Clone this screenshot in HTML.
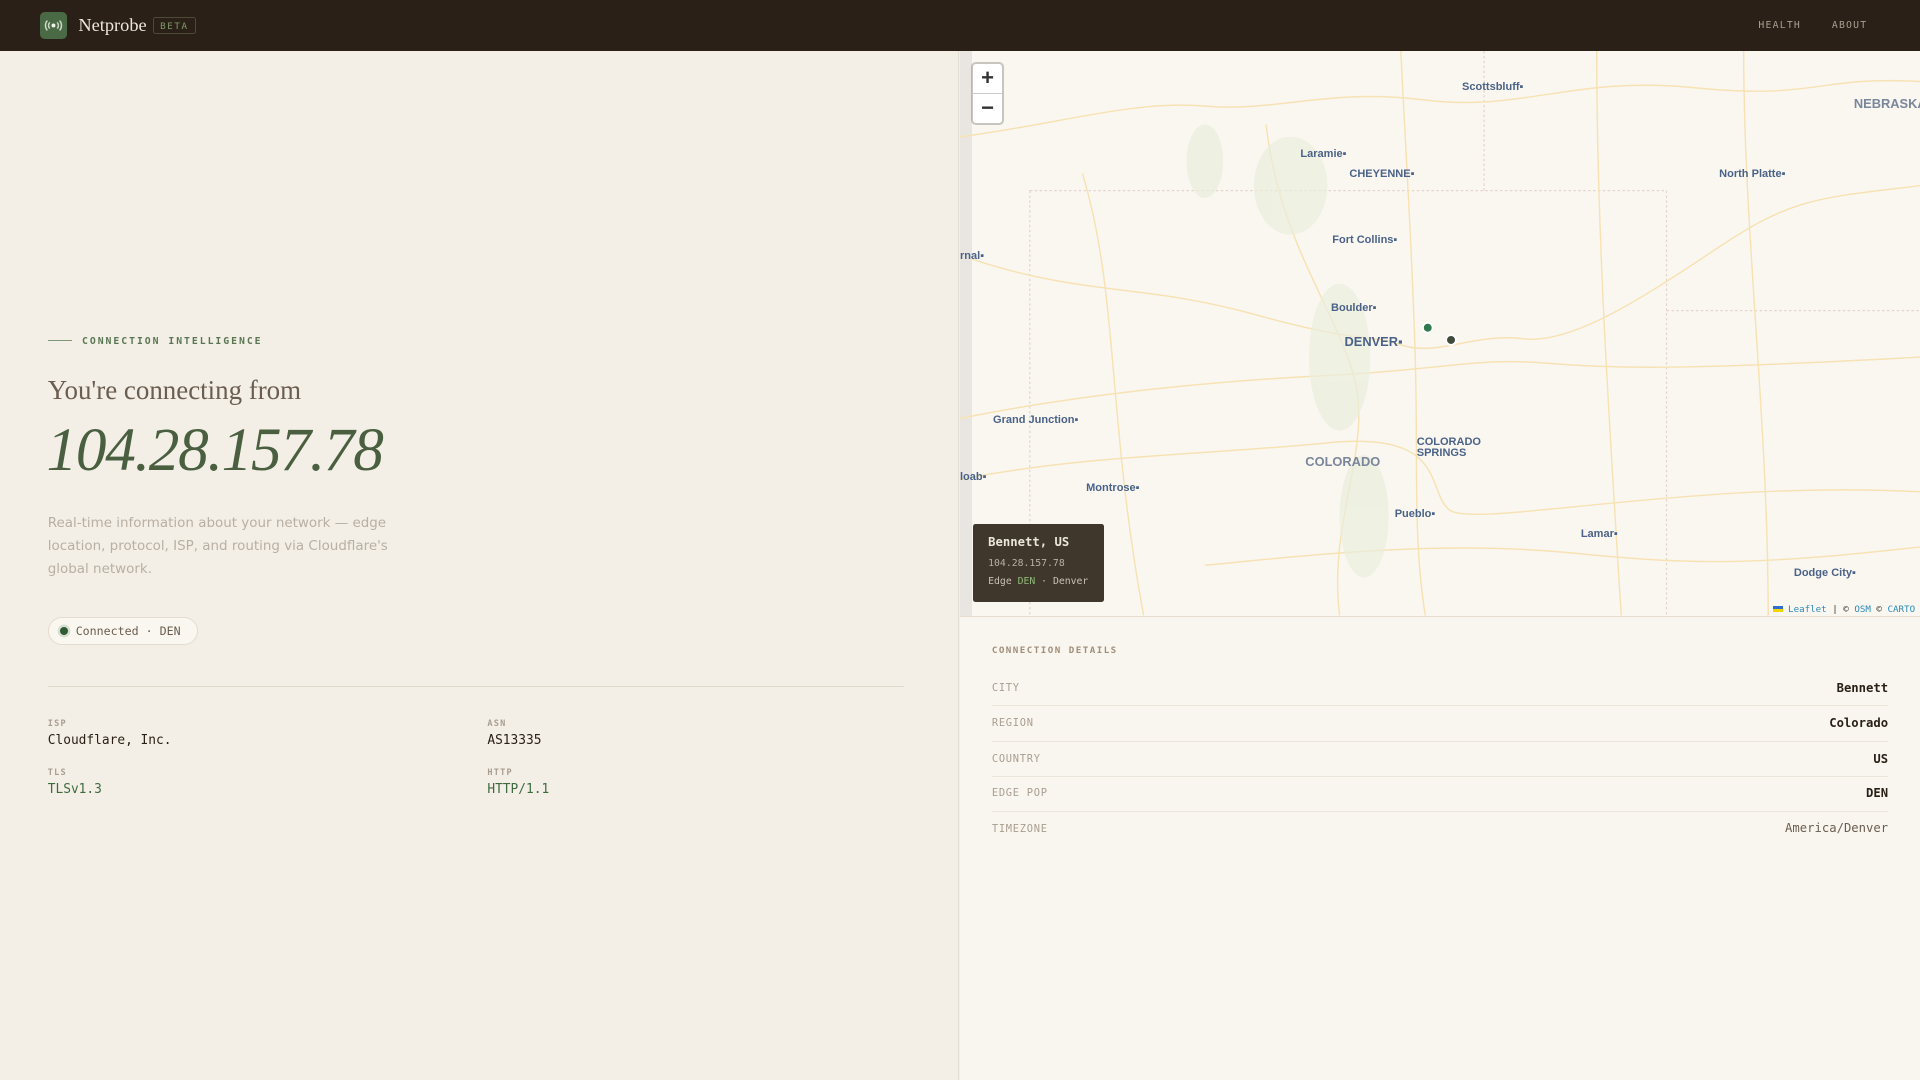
<!DOCTYPE html>
<html><head><meta charset="utf-8"><style>
html{zoom:1.22449}
*{box-sizing:border-box;margin:0;padding:0}
body{width:1568px;height:882px;background:#f3efe7;font-family:"Liberation Sans",sans-serif;overflow:hidden;position:relative}
.mono{font-family:"DejaVu Sans Mono","Liberation Mono",monospace}
.top{position:absolute;left:0;top:0;width:1568px;height:42px;background:#2a2017}
.logo{position:absolute;left:33px;top:10px;width:22px;height:22px;border-radius:4px;background:#4a6a45}
.brand{position:absolute;left:64px;top:12px;font-family:"Liberation Serif",serif;font-size:15px;color:#ece6da}
.beta{position:absolute;left:125px;top:14px;border:1px solid #4d4a36;border-radius:2px;color:#7e9a6a;font-size:7.5px;letter-spacing:1.3px;padding:2px 5px 1px}
.nav{position:absolute;top:16px;font-size:8px;letter-spacing:1px;color:#a99f90}
.left{position:absolute;left:0;top:42px;width:783px;height:840px;border-right:1px solid #e3ddd2}
.eyebrow{position:absolute;left:39px;top:274px;font-size:8px;font-weight:bold;letter-spacing:1.6px;color:#597652}
.eyebrow:before{content:"";display:inline-block;width:20px;height:1px;background:#7f9677;vertical-align:middle;margin-right:8px}
h1{position:absolute;left:39px;top:306px;font-family:"Liberation Serif",serif;font-weight:normal;font-size:22px;color:#6b5d4f}
.ip{position:absolute;left:38px;top:339px;font-family:"Liberation Serif",serif;font-style:italic;font-size:50px;color:#4a5f40;letter-spacing:-1px}
.desc{position:absolute;left:39px;top:418px;width:300px;font-family:"DejaVu Sans",sans-serif;font-size:11px;line-height:19px;color:#b9afa3}
.pill{position:absolute;left:39px;top:504px;width:123px;height:23px;border:1px solid #e3dccf;border-radius:12px;background:#faf7f1;font-size:9.5px;color:#6b5d4f;padding:5px 0 0 22px}
.pill:before{content:"";position:absolute;left:9px;top:7px;width:7px;height:7px;border-radius:50%;background:#2f5a35;box-shadow:0 0 0 2px #d8e0d2}
.hr{position:absolute;left:39px;top:560px;width:699px;height:1px;background:#e1d9cc}
.k{position:absolute;font-size:7px;letter-spacing:1px;color:#a99d90;font-weight:bold}
.v{position:absolute;font-size:10.5px;color:#2a2017}
.g{color:#3e6b3e}
.right{position:absolute;left:784px;top:503px;width:784px;height:379px;background:#f9f6f0;border-top:1px solid #e6dccd}
.dt{position:absolute;left:26px;top:23px;font-size:7.5px;letter-spacing:1.2px;color:#a08d78;font-weight:bold}
.row{position:absolute;left:26px;width:732px;height:29px;border-bottom:1px solid #ebe5da}
.row span{position:absolute;left:0;top:9px;font-size:8.5px;letter-spacing:.6px;color:#a99d90}
.row b{position:absolute;right:0;top:8px;font-size:10px;color:#2a2017}
.map{position:absolute;left:784px;top:42px;width:784px;height:461px;background:#faf7f1;overflow:hidden}
.lab{position:absolute;font-size:9px;font-weight:bold;color:#4a6288;white-space:nowrap}
.lab.big{font-size:10.5px}
.zoom{position:absolute;left:9px;top:9px;width:27px;height:51px;background:#fff;border:2px solid rgba(0,0,0,.2);border-radius:4px;background-clip:padding-box}
.zoom div{height:24px;text-align:center;font-size:18px;font-weight:bold;color:#333;line-height:23px}
.tip{position:absolute;left:11px;top:386px;width:107px;height:64px;background:#3f372c;border-radius:2px;color:#ece6da;padding:9px 12px}
.attr{position:absolute;right:4px;bottom:1px;font-size:7.5px;color:#333}
.attr a{color:#2b8ab8;text-decoration:none}
</style></head><body>
<div class="top">
 <div class="logo"><svg width="22" height="22" viewBox="0 0 22 22" fill="none" stroke="#cfdac8" stroke-width="1.2"><circle cx="11" cy="11" r="1.6" fill="#eef2ea" stroke="none"/><path d="M8 8.5a3.5 3.5 0 0 0 0 5M14 8.5a3.5 3.5 0 0 1 0 5M6 7a6 6 0 0 0 0 8M16 7a6 6 0 0 1 0 8"/></svg></div>
 <div class="brand">Netprobe</div>
 <div class="beta mono">BETA</div>
 <div class="nav mono" style="left:1436px">HEALTH</div>
 <div class="nav mono" style="left:1496px">ABOUT</div>
</div>
<div class="left">
</div>
<div class="eyebrow mono">CONNECTION INTELLIGENCE</div>
<h1>You're connecting from</h1>
<div class="ip">104.28.157.78</div>
<div class="desc">Real-time information about your network — edge location, protocol, ISP, and routing via Cloudflare's global network.</div>
<div class="pill mono">Connected · DEN</div>
<div class="hr"></div>
<div class="k mono" style="left:39px;top:587px">ISP</div>
<div class="v mono" style="left:39px;top:599px">Cloudflare, Inc.</div>
<div class="k mono" style="left:398px;top:587px">ASN</div>
<div class="v mono" style="left:398px;top:599px">AS13335</div>
<div class="k mono" style="left:39px;top:627px">TLS</div>
<div class="v mono g" style="left:39px;top:639px">TLSv1.3</div>
<div class="k mono" style="left:398px;top:627px">HTTP</div>
<div class="v mono g" style="left:398px;top:639px">HTTP/1.1</div>

<div class="map">
 <div style="position:absolute;left:0;top:0;width:10px;height:461px;background:#e9e6e1"></div>
 <svg width="784" height="461" style="position:absolute;left:0;top:0" fill="none">
  <g stroke="#e6d3cc" stroke-dasharray="2 2" stroke-width="1">
   <path d="M57 114V461M57 114H577V461M577 212H784M428 0V114"/>
  </g>
  <g stroke="#f7e2b4" stroke-width="1.2">
   <path d="M0 70C80 60 140 40 200 45S300 30 380 40 500 20 600 30 700 20 784 25"/>
   <path d="M10 170C100 200 150 190 240 215S330 230 360 240 420 230 460 235 560 200 620 160 700 120 784 110"/>
   <path d="M0 300C100 280 200 270 300 265S420 250 480 255 600 260 784 250"/>
   <path d="M0 350C100 330 200 330 300 320S380 360 400 375 600 350 784 360"/>
   <path d="M360 0C365 100 370 180 372 260S370 400 380 461"/>
   <path d="M250 60C260 150 300 200 320 260S300 380 310 461"/>
   <path d="M200 420C300 410 400 400 500 410S650 420 784 405"/>
   <path d="M520 0C520 150 530 300 540 461M640 0C640 150 660 300 660 461"/>
   <path d="M100 100C130 200 120 300 150 461"/>
  </g>
  <g fill="#e9eedd" opacity=".7">
   <ellipse cx="270" cy="110" rx="30" ry="40"/><ellipse cx="310" cy="250" rx="25" ry="60"/><ellipse cx="330" cy="380" rx="20" ry="50"/><ellipse cx="200" cy="90" rx="15" ry="30"/>
  </g>
  <circle cx="382" cy="226" r="4" fill="#2f7a4e" stroke="#fff" stroke-width="1.5"/>
  <circle cx="401" cy="236" r="4" fill="#3f4a3a" stroke="#fff" stroke-width="1.5"/>
 </svg>
 <div class="lab" style="left:410px;top:24px">Scottsbluff▪</div>
 <div class="lab big" style="left:730px;top:36px;color:#7a869a">NEBRASKA</div>
 <div class="lab" style="left:278px;top:79px">Laramie▪</div>
 <div class="lab" style="left:318px;top:95px">CHEYENNE▪</div>
 <div class="lab" style="left:620px;top:95px">North Platte▪</div>
 <div class="lab" style="left:304px;top:149px">Fort Collins▪</div>
 <div class="lab" style="left:0px;top:162px">rnal▪</div>
 <div class="lab" style="left:303px;top:205px">Boulder▪</div>
 <div class="lab big" style="left:314px;top:231px">DENVER▪</div>
 <div class="lab" style="left:27px;top:296px">Grand Junction▪</div>
 <div class="lab" style="left:373px;top:315px;line-height:9px">COLORADO<br>SPRINGS</div>
 <div class="lab big" style="left:282px;top:329px;color:#7a869a">COLORADO</div>
 <div class="lab" style="left:0;top:343px">loab▪</div>
 <div class="lab" style="left:103px;top:352px">Montrose▪</div>
 <div class="lab" style="left:355px;top:373px">Pueblo▪</div>
 <div class="lab" style="left:507px;top:389px">Lamar▪</div>
 <div class="lab" style="left:681px;top:421px">Dodge City▪</div>
 <div class="zoom"><div style="border-bottom:1px solid #ccc">+</div><div>−</div></div>
 <div class="tip mono"><div style="font-size:10px;font-weight:bold">Bennett, US</div><div style="font-size:8px;color:#b9afa3;margin-top:7px">104.28.157.78</div><div style="font-size:8px;color:#c9c0b3;margin-top:6px">Edge <span style="color:#8fba7a">DEN</span> · Denver</div></div>
 <div class="attr mono"><span style="display:inline-block;width:8px;height:5px;background:linear-gradient(#2d6fd0 50%,#f5d400 50%)"></span> <a>Leaflet</a> | © <a>OSM</a> © <a>CARTO</a></div>
</div>

<div class="right">
 <div class="dt mono">CONNECTION DETAILS</div>
 <div class="row mono" style="top:44px"><span>CITY</span><b>Bennett</b></div>
 <div class="row mono" style="top:73px"><span>REGION</span><b>Colorado</b></div>
 <div class="row mono" style="top:102px"><span>COUNTRY</span><b>US</b></div>
 <div class="row mono" style="top:130px"><span>EDGE POP</span><b class="g">DEN</b></div>
 <div class="row mono" style="top:159px;border:none"><span>TIMEZONE</span><b style="font-weight:normal;color:#6b5d4f">America/Denver</b></div>
</div>
</body></html>
